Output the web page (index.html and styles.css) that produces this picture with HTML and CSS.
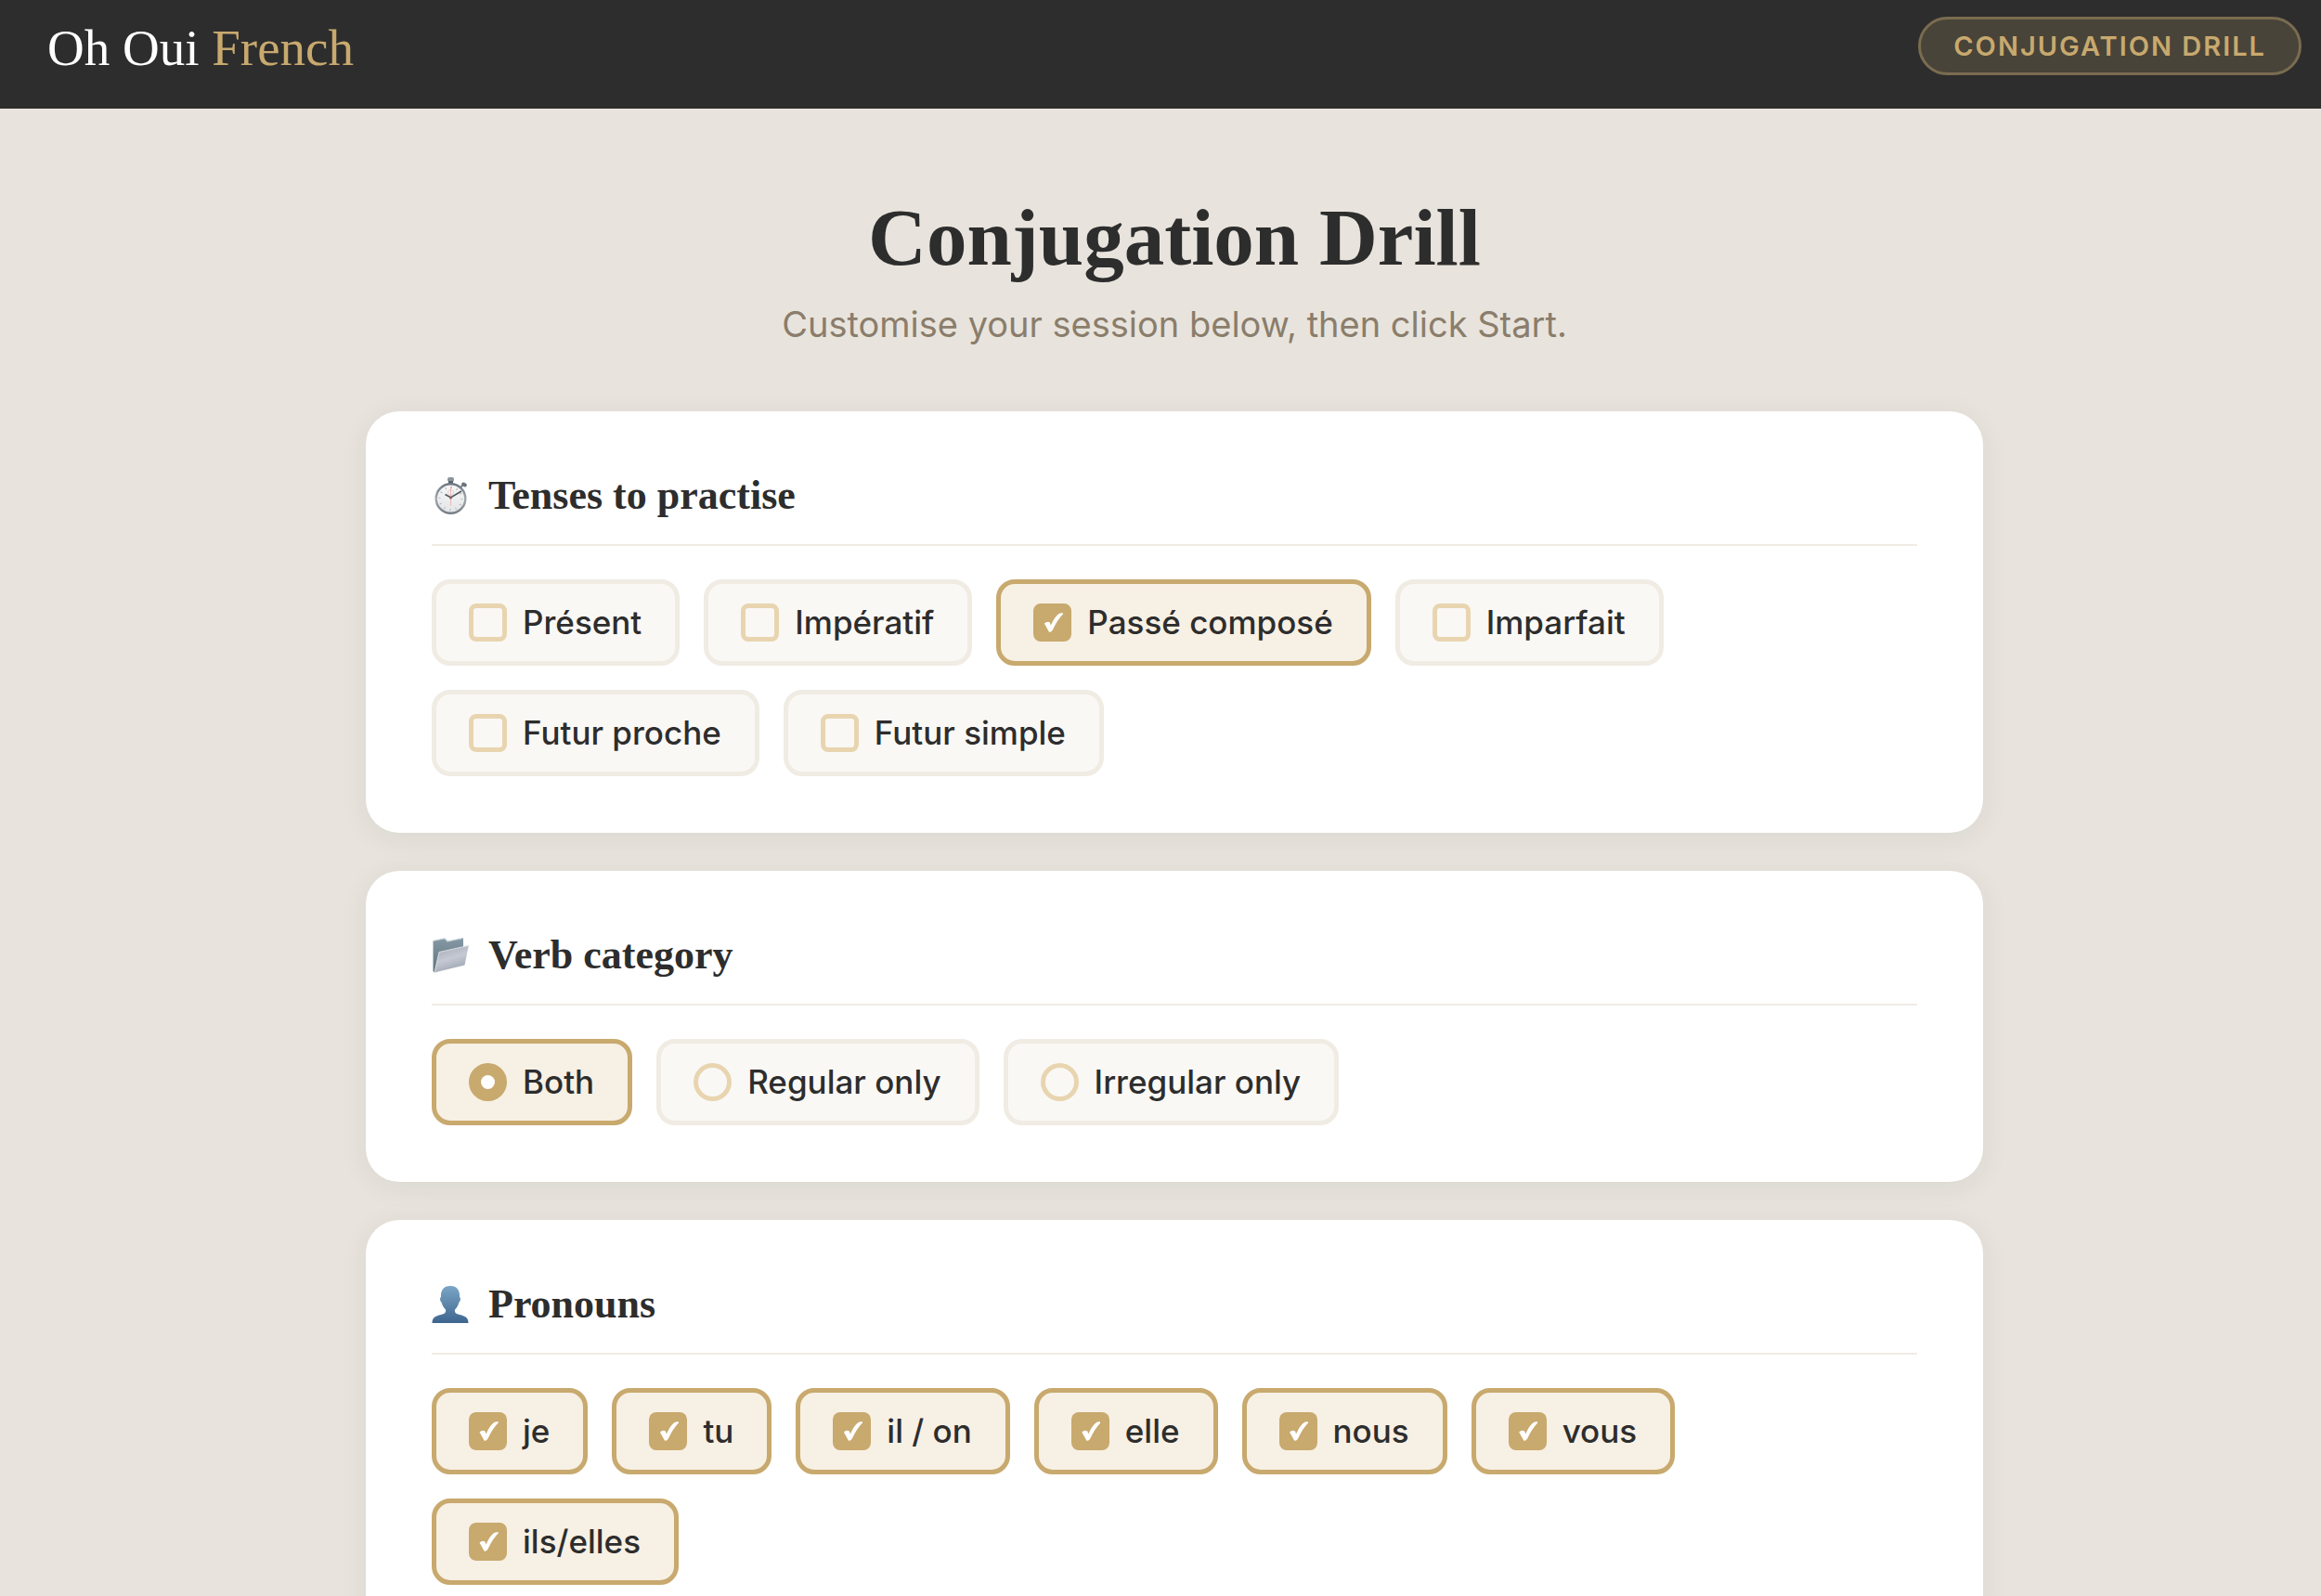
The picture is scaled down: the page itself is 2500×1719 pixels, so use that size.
FILE: index.html
```html
<!DOCTYPE html>
<html lang="en">
<head>
    <meta charset="utf-8">
    <meta name="viewport" content="width=device-width, initial-scale=1">
    <title>Oh Oui French - Conjugation Drill</title>
    <link rel="stylesheet" href="styles.css">
</head>
<body>
    <header class="topbar">
        <a class="logo" href="#">Oh Oui <span>French</span></a>
        <span class="badge">Conjugation Drill</span>
    </header>

    <main class="setup">
        <div class="intro">
            <h1>Conjugation Drill</h1>
            <p>Customise your session below, then click Start.</p>
        </div>

        <!-- Tenses -->
        <section class="card" role="group" aria-labelledby="tenses-title">
            <h2 class="card-title" id="tenses-title">
                <svg class="icon" viewBox="0 0 40 40" aria-hidden="true">
                    <defs>
                        <linearGradient id="rim" x1="0" y1="0" x2="0" y2="1">
                            <stop offset="0" stop-color="#6d7883"/>
                            <stop offset="0.5" stop-color="#a2a8b0"/>
                            <stop offset="1" stop-color="#767e86"/>
                        </linearGradient>
                        <linearGradient id="face" x1="0" y1="0" x2="0" y2="1">
                            <stop offset="0" stop-color="#f7f7f7"/>
                            <stop offset="1" stop-color="#e4e5e8"/>
                        </linearGradient>
                    </defs>
                    <rect x="17" y="0" width="7" height="5" rx="2" fill="#8b959e"/>
                    <rect x="18" y="4" width="5" height="4" fill="#5b656f"/>
                    <path d="M31 11 L35 7" stroke="#7b858e" stroke-width="2"/>
                    <rect x="32" y="6" width="6" height="4" rx="2" fill="#68737d" transform="rotate(30 35 8)"/>
                    <circle cx="20.5" cy="23" r="15.8" fill="url(#face)" stroke="url(#rim)" stroke-width="2.4"/>
                    <circle cx="20.5" cy="23" r="12" fill="none" stroke="#b2b6bb" stroke-width="2.4" stroke-dasharray="1 5.28"/>
                    <circle cx="20.5" cy="16.5" r="3" fill="none" stroke="#e8cfcd" stroke-width="1"/>
                    <path d="M20.5 10 V31" stroke="#e5b5b1" stroke-width="0.9"/>
                    <path d="M14.5 18.5 L20.5 22 L32 15" fill="none" stroke="#4a535c" stroke-width="1.5"/>
                    <circle cx="20.5" cy="22" r="1.5" fill="#8d5d5b"/>
                </svg>
                Tenses to practise
            </h2>
            <div class="options">
                <label class="option"><input type="checkbox" name="tense" value="present">Présent</label>
                <label class="option"><input type="checkbox" name="tense" value="imperatif">Impératif</label>
                <label class="option"><input type="checkbox" name="tense" value="passe-compose" checked>Passé composé</label>
                <label class="option"><input type="checkbox" name="tense" value="imparfait">Imparfait</label>
                <label class="option"><input type="checkbox" name="tense" value="futur-proche">Futur proche</label>
                <label class="option"><input type="checkbox" name="tense" value="futur-simple">Futur simple</label>
            </div>
        </section>

        <!-- Verb category -->
        <section class="card" role="group" aria-labelledby="category-title">
            <h2 class="card-title" id="category-title">
                <svg class="icon" viewBox="0 0 40 40" aria-hidden="true">
                    <defs>
                        <linearGradient id="folder-back" x1="0" y1="0" x2="0" y2="1">
                            <stop offset="0" stop-color="#8599a4"/>
                            <stop offset="1" stop-color="#5f7380"/>
                        </linearGradient>
                        <linearGradient id="folder-front" x1="0.2" y1="0" x2="0.6" y2="1">
                            <stop offset="0" stop-color="#a4abb8"/>
                            <stop offset="0.5" stop-color="#c6c9d3"/>
                            <stop offset="1" stop-color="#98a2b0"/>
                        </linearGradient>
                    </defs>
                    <path d="M1.5 4.5 L14 2 L17 5 L34 1.5 V24 L3 38.5 L1.5 37 Z" fill="url(#folder-back)"/>
                    <path d="M1.5 4.5 L14 2 L17 5 L34 1.5" fill="none" stroke="#b9c8cf" stroke-width="1.2"/>
                    <path d="M8 16.5 L39.5 9.5 Q40 9.5 39.5 11 L35.5 30.5 L3 38.5 Z" fill="url(#folder-front)"/>
                    <path d="M3 38.5 L8 16.5 L39.5 9.5" fill="none" stroke="#dfe3e8" stroke-width="0.9"/>
                </svg>
                Verb category
            </h2>
            <div class="options">
                <label class="option"><input type="radio" name="category" value="both" checked>Both</label>
                <label class="option"><input type="radio" name="category" value="regular">Regular only</label>
                <label class="option"><input type="radio" name="category" value="irregular">Irregular only</label>
            </div>
        </section>

        <!-- Pronouns -->
        <section class="card" role="group" aria-labelledby="pronouns-title">
            <h2 class="card-title" id="pronouns-title">
                <svg class="icon" viewBox="0 0 40 40" aria-hidden="true">
                    <defs>
                        <linearGradient id="bust" x1="0" y1="0" x2="0" y2="1">
                            <stop offset="0" stop-color="#7ba6c6"/>
                            <stop offset="1" stop-color="#3f658f"/>
                        </linearGradient>
                    </defs>
                    <path d="M20 0 C27 0 30.5 4.5 30 12 C31.5 12.5 31 17 29.5 17.5 C28.5 21.5 26.5 24 25 25.5 C24.5 29 26 30 30 31 C36 32.5 39.5 34 39.5 40 H0.5 C0.5 34 4 32.5 10 31 C14 30 15.5 29 15 25.5 C13.5 24 11.5 21.5 10.5 17.5 C9 17 8.5 12.5 10 12 C9.5 4.5 13 0 20 0 Z" fill="url(#bust)"/>
                </svg>
                Pronouns
            </h2>
            <div class="options">
                <label class="option"><input type="checkbox" name="pronoun" value="je" checked>je</label>
                <label class="option"><input type="checkbox" name="pronoun" value="tu" checked>tu</label>
                <label class="option"><input type="checkbox" name="pronoun" value="il" checked>il / on</label>
                <label class="option"><input type="checkbox" name="pronoun" value="elle" checked>elle</label>
                <label class="option"><input type="checkbox" name="pronoun" value="nous" checked>nous</label>
                <label class="option"><input type="checkbox" name="pronoun" value="vous" checked>vous</label>
                <label class="option"><input type="checkbox" name="pronoun" value="ils" checked>ils/elles</label>
            </div>
        </section>
    </main>
</body>
</html>
```
FILE: styles.css
```css
:root {
    --dark: #2d2d2d;
    --gold: #c8a96e;
    --gold-light: #e8d5b0;
    --cream: #f7f0e4;
    --sand: #e8e4dd;
    --line: #f0ece4;
    --muted: #8b7d6b;
}

* {
    box-sizing: border-box;
}

body {
    margin: 0;
    background: var(--sand);
    color: var(--dark);
    font-family: Inter, "Liberation Sans", sans-serif;
}

/* Top bar */
.topbar {
    display: flex;
    justify-content: space-between;
    align-items: flex-start;
    padding: 18px 21px 32px 51px;
    background: var(--dark);
}

.logo {
    color: #fff;
    font-family: "Liberation Serif", serif;
    font-size: 55px;
    line-height: 67px;
    text-decoration: none;
}

.logo span {
    color: var(--gold);
}

.badge {
    padding: 0 35px;
    border: 3px solid #7a6c50;
    border-radius: 50px;
    background: #494439;
    color: var(--gold);
    font-size: 29px;
    font-weight: 600;
    line-height: 57px;
    letter-spacing: 2px;
    text-transform: uppercase;
}

/* Page */
.setup {
    max-width: 1772px;
    margin: 0 auto;
    padding: 85px 0 60px 30px;
}

.intro {
    margin-bottom: 65px;
    text-align: center;
}

.intro h1 {
    margin: 0 0 10px;
    font-family: "Liberation Serif", serif;
    font-size: 87px;
    line-height: 108px;
}

.intro p {
    margin: 0;
    color: var(--muted);
    font-size: 38px;
    line-height: 58px;
}

/* Cards */
.card {
    margin-bottom: 41px;
    padding: 65px 71px 61px;
    border-radius: 36px;
    background: #fff;
    box-shadow: 0 5px 30px rgba(45, 45, 45, 0.07);
}

.card-title {
    display: flex;
    align-items: center;
    gap: 21px;
    margin: 0 0 36px;
    padding-bottom: 26px;
    border-bottom: 2px solid var(--line);
    font-family: "Liberation Serif", serif;
    font-size: 44px;
    line-height: 52px;
}

.icon {
    width: 40px;
    height: 40px;
    flex: none;
}

.options {
    display: flex;
    flex-wrap: wrap;
    gap: 26px;
}

.option {
    display: flex;
    align-items: center;
    gap: 17px;
    padding: 20px 36px 20px 35px;
    border: 5px solid var(--line);
    border-radius: 20px;
    background: #faf8f5;
    font-size: 35px;
    font-weight: 500;
    line-height: 43px;
    cursor: pointer;
}

.option:has(input:checked) {
    border-color: var(--gold);
    background: var(--cream);
}

/* Checkboxes and radios */
.option input {
    appearance: none;
    display: grid;
    place-items: center;
    width: 41px;
    height: 41px;
    margin: 0;
    border: 5px solid var(--gold-light);
    border-radius: 8px;
    cursor: pointer;
}

.option input[type="radio"] {
    border-radius: 50%;
}

.option input:checked {
    border-color: var(--gold);
    background: var(--gold);
}

.option input[type="checkbox"]:checked::before {
    content: "";
    width: 22px;
    height: 22px;
    background: #fff;
    clip-path: path("M2 12 Q5 9 8 11 L9 14 Q13 5 17 2 Q20 0 23 1 Q16 8 11 19 Q9 22 7 21 Z");
}

.option input[type="radio"]:checked::before {
    content: "";
    width: 15px;
    height: 15px;
    border-radius: 50%;
    background: #fff;
}
```
